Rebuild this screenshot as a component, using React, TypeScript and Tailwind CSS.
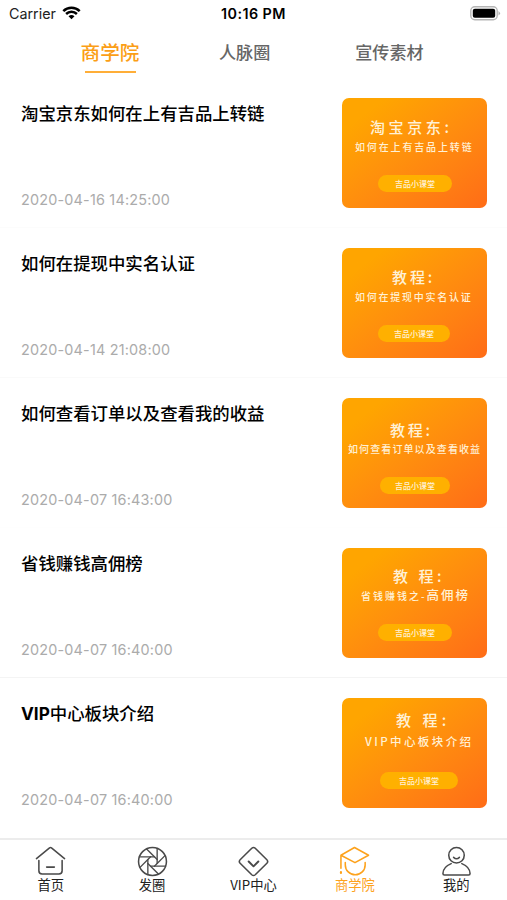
import React from "react";

type Lesson = {
  title: React.ReactNode;
  date: string;
  border: string;
  heading: string;
  headingClass: string;
  sub: React.ReactNode;
  subClass: string;
  pillClass: string;
};

const lessons: Lesson[] = [
  {
    title: "淘宝京东如何在上有吉品上转链",
    date: "2020-04-16 14:25:00",
    border: "border-[#fcfcfc]",
    heading: "淘宝京东:",
    headingClass: "mt-[19px] ml-[28px] tracking-[3.6px]",
    sub: "如何在上有吉品上转链",
    subClass: "mt-[2px] ml-[13px] text-[10px] tracking-[1.85px]",
    pillClass: "mt-[20px] ml-[36px] w-[74px]",
  },
  {
    title: "如何在提现中实名认证",
    date: "2020-04-14 21:08:00",
    border: "border-[#fafafa]",
    heading: "教程:",
    headingClass: "mt-[19px] ml-[50px] tracking-[2.9px]",
    sub: "如何在提现中实名认证",
    subClass: "mt-[2px] ml-[13px] text-[10px] tracking-[1.75px]",
    pillClass: "mt-[20px] ml-[36px] w-[72px]",
  },
  {
    title: "如何查看订单以及查看我的收益",
    date: "2020-04-07 16:43:00",
    border: "border-[#fefefe]",
    heading: "教程:",
    headingClass: "mt-[22px] ml-[48px] tracking-[2.8px]",
    sub: "如何查看订单以及查看收益",
    subClass: "mt-[1px] ml-[6px] text-[10px] tracking-[1.1px]",
    pillClass: "mt-[20px] ml-[38px] w-[70px]",
  },
  {
    title: "省钱赚钱高佣榜",
    date: "2020-04-07 16:40:00",
    border: "border-[#f4f4f4]",
    heading: "教 程:",
    headingClass: "mt-[18px] ml-[51px] tracking-[3.5px]",
    sub: (
      <>
        省钱赚钱之-<span className="text-[12.5px] tracking-[1.9px]">高佣榜</span>
      </>
    ),
    subClass: "mt-[1px] ml-[19px] text-[10px] tracking-[2px]",
    pillClass: "mt-[21px] ml-[36px] w-[74px]",
  },
  {
    title: (
      <>
        <span className="font-['Inter','Liberation_Sans',sans-serif] text-[17.2px] font-bold">VIP</span>中心板块介绍
      </>
    ),
    date: "2020-04-07 16:40:00",
    border: "border-white",
    heading: "教 程:",
    headingClass: "mt-[12px] ml-[54px] tracking-[4.1px]",
    sub: "VIP中心板块介绍",
    subClass: "mt-[3px] ml-[23px] text-[11.5px] tracking-[2.4px]",
    pillClass: "mt-[23px] ml-[38px] w-[78px]",
  },
];

function StatusBar() {
  return (
    <header className="relative flex h-7 items-center justify-between pl-[9px] pr-[6px] font-['Inter','Liberation_Sans',sans-serif] text-black">
      <div className="flex items-center gap-[6px]">
        <span className="text-[14.3px] leading-5 text-[#222]">Carrier</span>
        <svg width="19" height="14" viewBox="0 0 19 14" fill="none" stroke="#000" strokeWidth="2.5" className="-mt-[2px]">
          <path d="M1.3 5.2C5.9.7 13.1.7 17.7 5.2" />
          <path d="M4.1 8C7.1 5.1 11.9 5.1 14.9 8" />
          <path d="M9.5 13.2 6.5 10.3Q9.5 7.8 12.5 10.3Z" fill="#000" stroke="none" />
        </svg>
      </div>
      <span className="absolute left-[221px] text-[14.3px] font-semibold leading-5 tracking-[0.45px] whitespace-nowrap">
        10:16 PM
      </span>
      <svg width="31" height="15" viewBox="0 0 31 15" className="-mt-[2px]">
        <rect x=".8" y=".8" width="26.4" height="13" rx="4" fill="#fff" stroke="#b5b5b5" strokeWidth="1.4" />
        <rect x="2.8" y="2.8" width="22.4" height="9" rx="2" fill="#000" />
        <path d="M28.5 5q3 2.3 0 4.6z" fill="#b0b0b0" />
      </svg>
    </header>
  );
}

function Tabs() {
  return (
    <nav className="flex h-[50px] items-start font-medium text-[#666]">
      <button className="ml-[80px] mt-[10px] flex w-[60px] flex-col items-center text-[#fb9e16]">
        <span className="text-[19.6px] leading-7 whitespace-nowrap">商学院</span>
        <span className="mt-[5px] h-[2px] w-[51px] bg-[#ffae38]" />
      </button>
      <button className="ml-[79px] mt-[10px] text-[17.1px] leading-7">人脉圈</button>
      <button className="ml-[85px] mt-[10px] text-[17.1px] leading-7">宣传素材</button>
    </nav>
  );
}

function Cover({ lesson }: { lesson: Lesson }) {
  return (
    <div className="flex h-[110px] w-[145px] shrink-0 flex-col items-start overflow-hidden rounded-[7px] bg-linear-to-br from-[#ffa500] from-15% to-[#ff6c17] font-medium whitespace-nowrap text-[#fff1d6]">
      <div className={`h-5 text-[15px] leading-5 ${lesson.headingClass}`}>{lesson.heading}</div>
      <div className={`h-4 leading-4 ${lesson.subClass}`}>{lesson.sub}</div>
      <div
        className={`flex h-[17px] items-center justify-center rounded-full bg-[#ffb000] text-[8px] leading-none ${lesson.pillClass}`}
      >
        吉品小课堂
      </div>
    </div>
  );
}

function Row({ lesson }: { lesson: Lesson }) {
  return (
    <li className={`flex h-[150px] justify-between border-b pl-[21px] pr-5 pt-5 ${lesson.border}`}>
      <div className="flex flex-col">
        <h2 className="mt-[3px] h-6 text-[17.4px] font-medium leading-6 text-black">{lesson.title}</h2>
        <time className="mt-[65px] font-['Inter','Liberation_Sans',sans-serif] text-[14.4px] leading-5 tracking-[0.2px] text-[#ababab]">
          {lesson.date}
        </time>
      </div>
      <Cover lesson={lesson} />
    </li>
  );
}

const bladeAngles = [0, 45, 90, 135, 180, 225, 270, 315];

const icons = {
  home: (
    <>
      <path d="M1.5 13 15 2Q16 1.2 17 2L30.5 13" />
      <path d="M4 15V25.5Q4 28.8 7.3 28.8H24.7Q28 28.8 28 25.5V15M12 21.8H20" />
    </>
  ),
  shutter: (
    <>
      <circle cx="16" cy="16" r="14.4" />
      {bladeAngles.map((angle) => (
        <path key={angle} d="M18 11.2H2.6" strokeWidth="1.4" transform={`rotate(${angle} 16 16)`} />
      ))}
    </>
  ),
  diamond: (
    <>
      <path d="M14.2 2.3Q16 .8 17.8 2.3L29.8 14.2Q31.5 16 29.8 17.8L17.8 29.7Q16 31.2 14.2 29.7L2.2 17.8Q.5 16 2.2 14.2Z" />
      <path d="m11 16 5 5 5-5" strokeWidth="2" />
    </>
  ),
  school: (
    <>
      <path d="M2 9.5 16 1.5 30.5 9.5 16.5 17.2ZM2 9.5V23" />
      <path d="M6.5 17V19.5A10.2 10.2 0 0 0 27 19.5V17" />
      <path d="M2 27V27.8" strokeWidth="2.2" />
    </>
  ),
  user: (
    <>
      <circle cx="16" cy="9.5" r="8" />
      <path d="M13 11.7Q16 14.7 19 11.7" />
      <path d="M10.5 18.2C5 20.5 2 24.5 2 28.5Q2 30 3.5 30H28.5Q30 30 30 28.5C30 24.5 27 20.5 21.5 18.2" />
    </>
  ),
};

const navItems = [
  { label: "首页", icon: icons.home, active: false },
  { label: "发圈", icon: icons.shutter, active: false },
  { label: "VIP中心", icon: icons.diamond, active: false },
  { label: "商学院", icon: icons.school, active: true },
  { label: "我的", icon: icons.user, active: false },
];

export default function App() {
  return (
    <div className="flex h-[900px] w-[507px] flex-col overflow-hidden bg-white font-['Noto_Sans_CJK_SC',sans-serif]">
      <StatusBar />
      <Tabs />
      <ul className="h-[760px]">
        {lessons.map((lesson, index) => (
          <Row key={index} lesson={lesson} />
        ))}
      </ul>
      <footer className="grid h-[62px] grid-cols-5 border-t-2 border-[#ececec]">
        {navItems.map((item) => (
          <button
            key={item.label}
            className={`flex flex-col items-center pt-[6px] ${item.active ? "text-[#fda21c]" : "text-[#222]"}`}
          >
            <svg
              width="31"
              height="31"
              viewBox="0 0 32 32"
              fill="none"
              stroke={item.active ? "#fda21c" : "#4a4a4a"}
              strokeWidth="1.6"
              strokeLinecap="round"
              strokeLinejoin="round"
            >
              {item.icon}
            </svg>
            <span className="-mt-px text-[13.3px] leading-[18px] whitespace-nowrap">{item.label}</span>
          </button>
        ))}
      </footer>
    </div>
  );
}
